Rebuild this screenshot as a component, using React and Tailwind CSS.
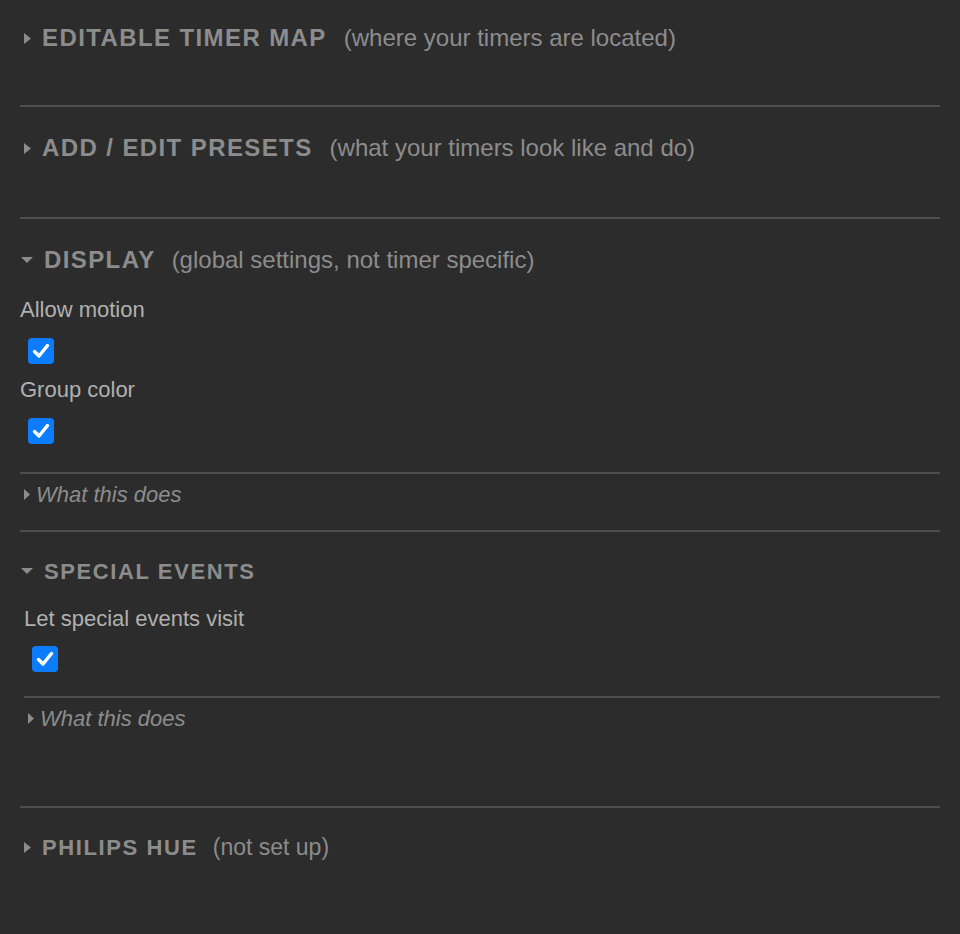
import React, { useState } from "react";

const font = { fontFamily: '"Liberation Sans", Arial, sans-serif' };

const Caret = ({ open }) =>
  open ? (
    <svg width="14" height="8" viewBox="0 0 14 8" className="shrink-0">
      <path d="M1 1h12L7 7z" fill="#8c8c8c" />
    </svg>
  ) : (
    <svg width="7" height="11" viewBox="0 0 7 11" className="shrink-0">
      <path d="M0 0l7 5.5L0 11z" fill="#8c8c8c" />
    </svg>
  );

// small = the later sections, which use a slightly smaller heading
const Heading = ({ title, note, open, small }) => (
  <div className={`flex items-center h-[28px] ${open ? "gap-[10px]" : "gap-[11px] pl-[4px]"}`}>
    <Caret open={open} />
    <span
      className={`font-bold text-[#8c8c8c] uppercase ${small ? "text-[22px] tracking-[1.6px]" : "text-[24px] tracking-[1.4px]"}`}
    >
      {title}
    </span>
    {note && (
      <span className={`text-[#8c8c8c] ${small ? "ml-[4px] text-[23px]" : "ml-[6px] text-[24px]"}`}>{note}</span>
    )}
  </div>
);

const Check = ({ checked, onChange }) => (
  <button
    onClick={onChange}
    className={`w-[26px] h-[26px] rounded-[4px] flex items-center justify-center ${checked ? "bg-[#0b7dfc]" : "bg-white"}`}
  >
    {checked && (
      <svg width="18" height="16" viewBox="0 0 18 16">
        <path d="M2.5 8.5l4.5 4.5L15.5 2.5" stroke="white" strokeWidth="3.4" fill="none" strokeLinecap="round" strokeLinejoin="round" />
      </svg>
    )}
  </button>
);

const Hint = () => (
  <div className="flex items-center gap-[6px] pl-[4px] h-[28px]">
    <svg width="6" height="11" viewBox="0 0 6 11">
      <path d="M0 0l6 5.5L0 11z" fill="#8c8c8c" />
    </svg>
    <span className="italic text-[22px] text-[#8c8c8c]">What this does</span>
  </div>
);

export default function App() {
  const [motion, setMotion] = useState(true);
  const [groupColor, setGroupColor] = useState(true);
  const [events, setEvents] = useState(true);

  return (
    <div className="min-h-screen bg-[#2c2c2c] px-[20px]" style={font}>
      <div className="pt-[24px] pb-[53px] border-b-2 border-[#4e4e4e]">
        <Heading title="Editable Timer Map" note="(where your timers are located)" />
      </div>

      <div className="pt-[27px] pb-[55px] border-b-2 border-[#4e4e4e]">
        <Heading title="Add / Edit Presets" note="(what your timers look like and do)" />
      </div>

      <div className="pt-[27px] border-b-2 border-[#4e4e4e]">
        <Heading title="Display" note="(global settings, not timer specific)" open />
        <div className="mt-[23px] text-[22px] text-[#b0b0b0] leading-[26px]">Allow motion</div>
        <div className="mt-[15px] pl-[8px] flex">
          <Check checked={motion} onChange={() => setMotion(!motion)} />
        </div>
        <div className="mt-[13px] text-[22px] text-[#b0b0b0] leading-[26px]">Group color</div>
        <div className="mt-[15px] pl-[8px] flex">
          <Check checked={groupColor} onChange={() => setGroupColor(!groupColor)} />
        </div>
        <div className="mt-[28px] border-t-2 border-[#4e4e4e] pt-[6px] pb-[22px]">
          <Hint />
        </div>
      </div>

      <div className="pt-[25px] pb-[74px] border-b-2 border-[#4e4e4e]">
        <Heading title="Special Events" open small />
        <div className="pl-[4px]">
          <div className="mt-[21px] text-[22px] text-[#b0b0b0] leading-[26px]">Let special events visit</div>
          <div className="mt-[14px] pl-[8px] flex">
            <Check checked={events} onChange={() => setEvents(!events)} />
          </div>
          <div className="mt-[24px] border-t-2 border-[#4e4e4e] pt-[6px]">
            <Hint />
          </div>
        </div>
      </div>

      <div className="pt-[25px] pb-[60px]">
        <Heading title="Philips Hue" note="(not set up)" small />
      </div>
    </div>
  );
}
